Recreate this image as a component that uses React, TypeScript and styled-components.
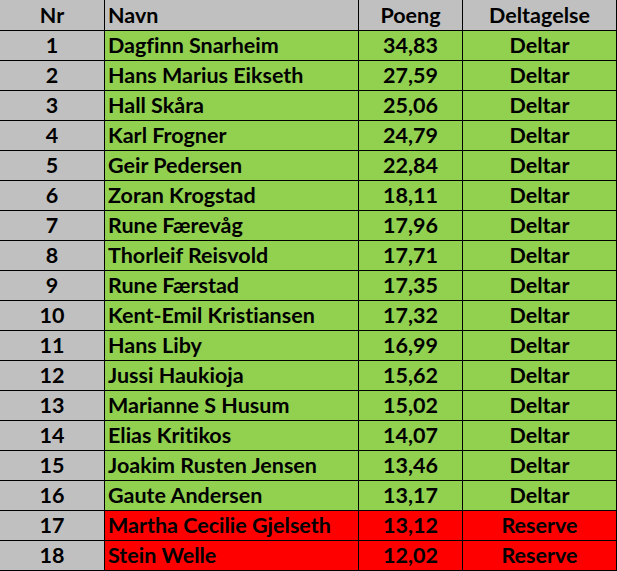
import React from "react";
import styled, { createGlobalStyle } from "styled-components";

const GlobalStyle = createGlobalStyle`
  html, body {
    margin: 0;
    padding: 0;
    background: #ffffff;
  }
`;

type Status = "Deltar" | "Reserve";

interface Player {
  nr: number;
  navn: string;
  poeng: string;
  status: Status;
}

const players: Player[] = [
  { nr: 1, navn: "Dagfinn Snarheim", poeng: "34,83", status: "Deltar" },
  { nr: 2, navn: "Hans Marius Eikseth", poeng: "27,59", status: "Deltar" },
  { nr: 3, navn: "Hall Skåra", poeng: "25,06", status: "Deltar" },
  { nr: 4, navn: "Karl Frogner", poeng: "24,79", status: "Deltar" },
  { nr: 5, navn: "Geir Pedersen", poeng: "22,84", status: "Deltar" },
  { nr: 6, navn: "Zoran Krogstad", poeng: "18,11", status: "Deltar" },
  { nr: 7, navn: "Rune Færevåg", poeng: "17,96", status: "Deltar" },
  { nr: 8, navn: "Thorleif Reisvold", poeng: "17,71", status: "Deltar" },
  { nr: 9, navn: "Rune Færstad", poeng: "17,35", status: "Deltar" },
  { nr: 10, navn: "Kent-Emil Kristiansen", poeng: "17,32", status: "Deltar" },
  { nr: 11, navn: "Hans Liby", poeng: "16,99", status: "Deltar" },
  { nr: 12, navn: "Jussi Haukioja", poeng: "15,62", status: "Deltar" },
  { nr: 13, navn: "Marianne S Husum", poeng: "15,02", status: "Deltar" },
  { nr: 14, navn: "Elias Kritikos", poeng: "14,07", status: "Deltar" },
  { nr: 15, navn: "Joakim Rusten Jensen", poeng: "13,46", status: "Deltar" },
  { nr: 16, navn: "Gaute Andersen", poeng: "13,17", status: "Deltar" },
  { nr: 17, navn: "Martha Cecilie Gjelseth", poeng: "13,12", status: "Reserve" },
  { nr: 18, navn: "Stein Welle", poeng: "12,02", status: "Reserve" },
];

const colors = {
  gray: "#c0c0c0",
  green: "#92d050",
  red: "#ff0000",
  line: "#000000",
};

const Sheet = styled.div`
  display: grid;
  grid-template-columns: 105px 254px 104px 154px;
  width: 617px;
  font-family: Lato, "Liberation Sans", sans-serif;
  font-weight: 700;
  font-size: 21.5px;
  font-variant-ligatures: none;
  color: #000;
`;

const Cell = styled.div<{ $bg: string; $align?: "left" | "center"; $head?: boolean }>`
  display: flex;
  align-items: center;
  justify-content: ${p => (p.$align === "left" ? "flex-start" : "center")};
  box-sizing: border-box;
  height: ${p => (p.$head ? "31px" : "30px")};
  padding-left: ${p => (p.$align === "left" ? "3px" : "0")};
  padding-top: 1px;
  background-color: ${p => p.$bg};
  border-right: 1px solid ${colors.line};
  border-bottom: 1px solid ${colors.line};
  white-space: nowrap;
  overflow: hidden;
  line-height: 1;
`;

export default function App() {
  return (
    <>
      <GlobalStyle />
      <Sheet>
        <Cell $head $bg={colors.gray}>Nr</Cell>
        <Cell $head $bg={colors.gray} $align="left">Navn</Cell>
        <Cell $head $bg={colors.gray}>Poeng</Cell>
        <Cell $head $bg={colors.gray}>Deltagelse</Cell>

        {players.map(p => {
          const bg = p.status === "Reserve" ? colors.red : colors.green;
          return (
            <React.Fragment key={p.nr}>
              <Cell $bg={colors.gray}>{p.nr}</Cell>
              <Cell $bg={bg} $align="left">{p.navn}</Cell>
              <Cell $bg={bg}>{p.poeng}</Cell>
              <Cell $bg={bg}>{p.status}</Cell>
            </React.Fragment>
          );
        })}
      </Sheet>
    </>
  );
}
